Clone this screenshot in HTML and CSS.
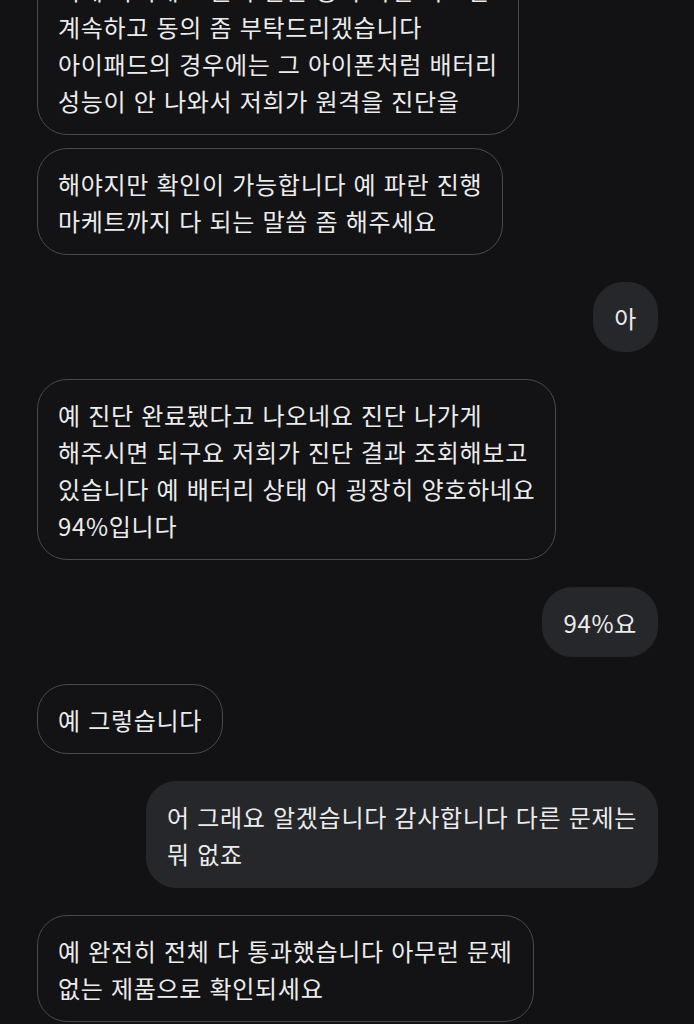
FILE: index.html
```html
<!DOCTYPE html>
<html lang="ko">
<head>
    <meta charset="UTF-8">
    <meta name="viewport" content="width=device-width, initial-scale=1.0">
    <title>대화</title>
    <link rel="stylesheet" href="styles.css">
</head>
<body>

    <div class="chat">
        <div class="msg them first">이제 아이패드 원격 진단 동의 화면 나오면<br>계속하고 동의 좀 부탁드리겠습니다<br>아이패드의 경우에는 그 아이폰처럼 배터리<br>성능이 안 나와서 저희가 원격을 진단을</div>
        <div class="msg them same">해야지만 확인이 가능합니다 예 파란 진행<br>마케트까지 다 되는 말씀 좀 해주세요</div>

        <div class="msg me">아</div>

        <div class="msg them">예 진단 완료됐다고 나오네요 진단 나가게<br>해주시면 되구요 저희가 진단 결과 조회해보고<br>있습니다 예 배터리 상태 어 굉장히 양호하네요<br>94%입니다</div>

        <div class="msg me">94%요</div>

        <div class="msg them">예 그렇습니다</div>

        <div class="msg me">어 그래요 알겠습니다 감사합니다 다른 문제는<br>뭐 없죠</div>

        <div class="msg them">예 완전히 전체 다 통과했습니다 아무런 문제<br>없는 제품으로 확인되세요</div>
    </div>

</body>
</html>
```

FILE: styles.css
```css
body {
    margin: 0;
    padding: 0;
    background-color: #121214;
    font-family: "Noto Sans CJK KR", "Noto Sans", sans-serif;
    color: #ececec;
    overflow: hidden;
}
.chat {
    display: flex;
    flex-direction: column;
    align-items: flex-start;
    padding: 0 36px 0 37px;
}
.msg {
    font-size: 24px;
    letter-spacing: 0.7px;
    line-height: 37px;
    padding: 15.5px 20px;
    border: 1px solid transparent;
    border-radius: 30px;
    white-space: nowrap;
    margin-top: 27px;
}
.msg.first {
    margin-top: -46px;
}
.msg.same {
    margin-top: 13px;
}
.them {
    align-self: flex-start;
    border-color: #4a4a4f;
    background-color: #131316;
}
.me {
    align-self: flex-end;
    background-color: #26272b;
    border-color: #26272b;
}
```
